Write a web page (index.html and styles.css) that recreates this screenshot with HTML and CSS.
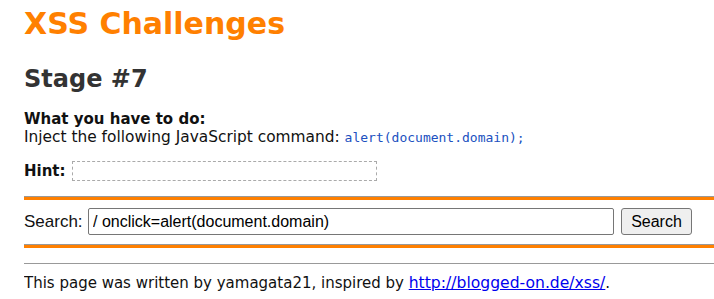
FILE: index.html
```html
<!DOCTYPE html>
<html>
<head>
    <title>XSS Challenges - Stage #7</title>
    <link rel="stylesheet" href="styles.css">
</head>
<body>
    <h1 class="title">XSS Challenges</h1>
    <h2 class="stage">Stage #7</h2>
    <div class="mission">
        <b>What you have to do:</b><br>
        Inject the following JavaScript command: <code>alert(document.domain);</code>
    </div>
    <div class="hint">
        <b>Hint:</b> <span class="hint-box"></span>
    </div>

    <hr class="bar">
    <form class="search" action="#" method="POST">
        <label for="p1">Search:</label>
        <input type="text" name="p1" id="p1" value="/ onclick=alert(document.domain)">
        <button type="submit">Search</button>
    </form>
    <hr class="bar">

    <hr class="footer-line">
    <p class="footer">This page was written by yamagata21, inspired by <a href="#">http://blogged-on.de/xss/</a>.</p>
</body>
</html>
```

FILE: styles.css
```css
* {
    box-sizing: border-box;
    margin: 0px;
}

body {
    margin: 0 0 0 24px;
    font-family: "DejaVu Sans", Verdana, sans-serif;
    font-size: 15.4px;
    line-height: 18px;
    color: #111;
    background: #fff;
}

b {
    font-size: 15px;
}

.title {
    color: #ff8000;
    font-size: 30px;
    line-height: 36px;
    margin-top: 6px;
}

.stage {
    color: #333;
    font-size: 24px;
    line-height: 28px;
    margin-top: 23px;
}

.mission {
    margin-top: 17px;
}

code {
    font-family: "DejaVu Sans Mono", monospace;
    font-size: 13px;
    color: #2050c0;
}

.hint {
    margin-top: 14px;
    height: 20px;
    display: flex;
    align-items: center;
    gap: 6px;
}

.hint-box {
    display: inline-block;
    width: 305px;
    height: 20px;
    border: 1px dashed #aaa;
}

.bar {
    height: 4px;
    border: 0;
    border-top: 1px solid #999;
    background: #ff8000;
}

.hint + .bar {
    margin-top: 15px;
}

.search {
    display: flex;
    align-items: center;
    padding: 8px 0 9px;
}

.search label {
    font-family: "Liberation Sans", Arial, sans-serif;
    font-size: 17px;
    width: 64px;
}

.search input {
    width: 526px;
    height: 27px;
    padding: 1px 4px;
    border: 1px solid #767676;
    border-radius: 2px;
    font-family: "Liberation Sans", Arial, sans-serif;
    font-size: 16px;
}

.search button {
    width: 71px;
    height: 27px;
    margin-left: 7px;
    font-family: "Liberation Sans", Arial, sans-serif;
    font-size: 16px;
    background: #efefef;
    border: 1px solid #767676;
    border-radius: 3px;
}

.footer-line {
    margin-top: 15px;
    border: 0;
    border-top: 1px solid #999;
}

.footer {
    margin-top: 10px;
    font-size: 15px;
}

.footer a {
    color: #0000ee;
    font-size: 15.6px;
}
```
